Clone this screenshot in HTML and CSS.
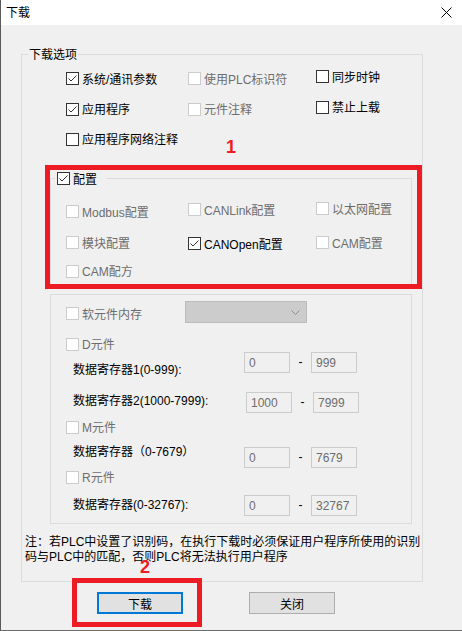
FILE: index.html
```html
<!DOCTYPE html>
<html lang="zh-CN">
<head>
    <meta charset="UTF-8">
    <title>下载</title>
    <link rel="stylesheet" href="styles.css">
</head>
<body>
    <div class="window">
        <div class="titlebar">
            <span class="title">下载</span>
            <svg class="close" width="11" height="11" viewBox="0 0 11 11"><path d="M0.5 0.5 L10.5 10.5 M10.5 0.5 L0.5 10.5" stroke="#000" stroke-width="1" fill="none"/></svg>
        </div>
        <div class="body">
            <div class="group outer">
                <span class="group-title">下载选项</span>
                <div class="opts">
                    <label class="check"><span class="box"><svg width="11" height="11" viewBox="0 0 11 11"><path d="M1.5 5.5 L4 8 L9.5 2.5" fill="none" stroke="#333"/></svg></span><span class="txt">系统/通讯参数</span></label>
                    <label class="check off"><span class="box"></span><span class="txt">使用PLC标识符</span></label>
                    <label class="check up2"><span class="box"></span><span class="txt">同步时钟</span></label>
                    <label class="check"><span class="box"><svg width="11" height="11" viewBox="0 0 11 11"><path d="M1.5 5.5 L4 8 L9.5 2.5" fill="none" stroke="#333"/></svg></span><span class="txt">应用程序</span></label>
                    <label class="check off"><span class="box"></span><span class="txt">元件注释</span></label>
                    <label class="check up2"><span class="box"></span><span class="txt">禁止上载</span></label>
                    <label class="check"><span class="box"></span><span class="txt">应用程序网络注释</span></label>
                </div>

                <div class="group config">
                    <label class="check group-title"><span class="box"><svg width="11" height="11" viewBox="0 0 11 11"><path d="M1.5 5.5 L4 8 L9.5 2.5" fill="none" stroke="#333"/></svg></span><span class="txt">配置</span></label>
                    <div class="opts cfg">
                        <label class="check off"><span class="box"></span><span class="txt">Modbus配置</span></label>
                        <label class="check off up2"><span class="box"></span><span class="txt">CANLink配置</span></label>
                        <label class="check off up3"><span class="box"></span><span class="txt">以太网配置</span></label>
                        <label class="check off"><span class="box"></span><span class="txt">模块配置</span></label>
                        <label class="check down1"><span class="box"><svg width="11" height="11" viewBox="0 0 11 11"><path d="M1.5 5.5 L4 8 L9.5 2.5" fill="none" stroke="#333"/></svg></span><span class="txt">CANOpen配置</span></label>
                        <label class="check off"><span class="box"></span><span class="txt">CAM配置</span></label>
                        <label class="check off"><span class="box"></span><span class="txt">CAM配方</span></label>
                    </div>
                </div>

                <div class="group mem">
                    <div class="soft-row">
                        <label class="check off"><span class="box"></span><span class="txt">软元件内存</span></label>
                        <div class="combo">
                            <svg width="9" height="5" viewBox="0 0 9 5"><path d="M0.5 0.5 L4.5 4.5 L8.5 0.5" fill="none" stroke="#8c8c8c"/></svg>
                        </div>
                    </div>

                    <label class="check off elem d-elem"><span class="box"></span><span class="txt">D元件</span></label>
                    <div class="data data-1">
                        <span class="data-label">数据寄存器1(0-999):</span>
                        <div class="range">
                            <input class="field" type="text" value="0" disabled>
                            <span class="dash">-</span>
                            <input class="field" type="text" value="999" disabled>
                        </div>
                    </div>
                    <div class="data data-2">
                        <span class="data-label">数据寄存器2(1000-7999):</span>
                        <div class="range">
                            <input class="field" type="text" value="1000" disabled>
                            <span class="dash">-</span>
                            <input class="field" type="text" value="7999" disabled>
                        </div>
                    </div>

                    <label class="check off elem m-elem"><span class="box"></span><span class="txt">M元件</span></label>
                    <div class="data data-3">
                        <span class="data-label">数据寄存器（0-7679）</span>
                        <div class="range">
                            <input class="field" type="text" value="0" disabled>
                            <span class="dash">-</span>
                            <input class="field" type="text" value="7679" disabled>
                        </div>
                    </div>

                    <label class="check off elem r-elem"><span class="box"></span><span class="txt">R元件</span></label>
                    <div class="data data-4">
                        <span class="data-label">数据寄存器(0-32767):</span>
                        <div class="range">
                            <input class="field" type="text" value="0" disabled>
                            <span class="dash">-</span>
                            <input class="field" type="text" value="32767" disabled>
                        </div>
                    </div>
                </div>

                <p class="note">注：若PLC中设置了识别码，在执行下载时必须保证用户程序所使用的识别<br>码与PLC中的匹配，否则PLC将无法执行用户程序</p>
            </div>

            <div class="buttons">
                <button class="btn default">下载</button>
                <button class="btn">关闭</button>
            </div>
        </div>

        <!-- annotations -->
        <div class="mark mark-1"></div>
        <span class="num num-1">1</span>
        <div class="mark mark-2"></div>
        <span class="num num-2">2</span>
    </div>
</body>
</html>
```

FILE: styles.css
```css
* {
    box-sizing: border-box;
}
body {
    margin: 0;
    font-family: "Liberation Sans", "Noto Sans CJK SC", sans-serif;
    font-size: 12px;
    background-color: #f0f0f0;
    color: #000;
}
.window {
    position: relative;
    width: 462px;
    height: 631px;
    border-left: 1px solid #5a5a5a;
    border-bottom: 1px solid #6b6b6b;
    background-color: #f0f0f0;
    overflow: hidden;
}
.titlebar {
    height: 25px;
    background-color: #fff;
    display: flex;
    align-items: center;
    justify-content: space-between;
    padding: 0 10px 0 5px;
}
.title {
    line-height: 16px;
}
.body {
    padding: 29px 0 0 20px;
}

/* group boxes */
.group {
    position: relative;
    border: 1px solid #dcdcdc;
}
.group-title {
    position: absolute;
    background-color: #f0f0f0;
    line-height: 16px;
}
.outer {
    width: 402px;
    height: 528px;
    padding: 8px 0 0 3px;
}
.outer > .group-title {
    top: -8px;
    left: 6px;
    padding: 0 1px;
}

/* checkboxes */
.check {
    display: flex;
    align-items: center;
    gap: 3px;
    line-height: 16px;
    white-space: nowrap;
}
.check .box {
    flex: none;
    display: flex;
    width: 13px;
    height: 13px;
    border: 1px solid #333;
    background-color: #fff;
}
.check .txt {
    padding-top: 2px;
}
.check.off {
    color: #6d6d6d;
}
.check.off .box {
    border-color: #cccccc;
}
.up2 {
    padding-bottom: 4px;
}
.up3 {
    padding-bottom: 6px;
}
.down1 {
    padding-top: 2px;
}

.opts {
    display: grid;
    grid-template-columns: 122px 128px auto;
    grid-template-rows: 31px 30px 30px;
    margin-left: 41px;
}

/* 配置 */
.config {
    width: 362px;
    height: 107px;
    margin: 24px 0 0 25px;
    padding: 17px 0 0 15px;
}
.config > .group-title {
    top: -7px;
    left: 4px;
    height: 13px;
    padding: 0 10px 0 2px;
}
.cfg {
    grid-template-rows: 31px 31px 26px;
    margin-left: 0;
}

/* 软元件内存 */
.mem {
    width: 362px;
    height: 230px;
    margin: 9px 0 0 25px;
    padding: 6px 0 0 15px;
}
.soft-row {
    display: flex;
    height: 22px;
}
.soft-row .check {
    width: 119px;
    padding-top: 3px;
}
.combo {
    width: 122px;
    height: 22px;
    border: 1px solid #bcbcbc;
    background-color: #cccccc;
    display: flex;
    align-items: center;
    justify-content: flex-end;
    padding-right: 6px;
}
.elem {
    height: 16px;
}
.d-elem {
    margin-top: 13px;
}
.m-elem {
    margin-top: 6px;
}
.r-elem {
    margin-top: 1px;
}

.data {
    display: flex;
    align-items: flex-start;
    padding-left: 7px;
}
.data-label {
    width: 171px;
    line-height: 16px;
    white-space: nowrap;
}
.range {
    display: flex;
}
.field {
    width: 46px;
    height: 21px;
    margin: 0;
    border: 1px solid #cccccc;
    background-color: #f0f0f0;
    color: #6d6d6d;
    font: inherit;
    padding: 0 0 0 4px;
    outline: none;
}
.dash {
    width: 21px;
    text-align: center;
    line-height: 20px;
}
.data-1 .data-label {
    margin-top: 10px;
}
.data-2 {
    margin-top: 14px;
}
.data-2 .data-label {
    width: 173px;
    margin-top: 1px;
}
.data-3 {
    margin-top: 9px;
}
.data-3 .range {
    margin-top: 3px;
}
.data-4 {
    margin-top: 10px;
}
.data-4 .data-label {
    margin-top: 2px;
}

.note {
    margin: 11px 0 0 0;
    line-height: 15px;
    white-space: nowrap;
}

/* buttons */
.buttons {
    display: flex;
    gap: 66px;
    margin: 10px 0 0 76px;
}
.btn {
    width: 86px;
    height: 22px;
    padding: 0;
    border: 1px solid #adadad;
    background-color: #e1e1e1;
    font: inherit;
    color: #000;
}
.btn.default {
    border: 2px solid #0078d7;
}

/* red annotations */
.mark {
    position: absolute;
    border: 5px solid #ed1c24;
}
.mark-1 {
    left: 44px;
    top: 165px;
    width: 377px;
    height: 124px;
}
.mark-2 {
    left: 71px;
    top: 578px;
    width: 130px;
    height: 49px;
}
.num {
    position: absolute;
    color: #ed1c24;
    font: bold 18px/18px "Liberation Sans", sans-serif;
}
.num-1 {
    left: 225px;
    top: 138px;
}
.num-2 {
    left: 139px;
    top: 558px;
}
```
